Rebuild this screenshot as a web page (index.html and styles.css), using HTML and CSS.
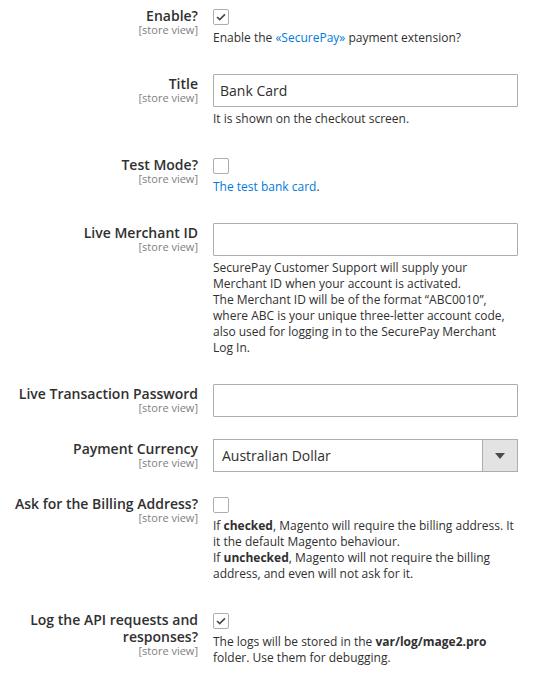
FILE: index.html
```html
<!DOCTYPE html>
<html lang="en">
<head>
<meta charset="utf-8">
<title>SecurePay settings</title>
<link rel="stylesheet" href="styles.css">
</head>
<body>
<div class="form">
  <div class="row">
    <div class="label"><span class="name">Enable?</span><span class="scope">[store view]</span></div>
    <div class="value">
      <span class="checkbox"><svg viewBox="0 0 16 16" width="14" height="14"><polyline points="3.5,8 6.5,11 12.5,5" fill="none" stroke="#514943" stroke-width="2"/></svg></span>
      <p class="note after-check">Enable the <a href="#">«SecurePay»</a> payment extension?</p>
    </div>
  </div>

  <div class="row">
    <div class="label"><span class="name">Title</span><span class="scope">[store view]</span></div>
    <div class="value">
      <input class="text" type="text" value="Bank Card">
      <p class="note after-input">It is shown on the checkout screen.</p>
    </div>
  </div>

  <div class="row">
    <div class="label"><span class="name">Test Mode?</span><span class="scope">[store view]</span></div>
    <div class="value">
      <span class="checkbox"></span>
      <p class="note after-check"><a href="#">The test bank card</a>.</p>
    </div>
  </div>

  <div class="row">
    <div class="label"><span class="name">Live Merchant ID</span><span class="scope">[store view]</span></div>
    <div class="value">
      <input class="text" type="text" value="">
      <p class="note after-input">SecurePay Customer Support will supply your Merchant ID when your account is activated.<br>The Merchant ID will be of the format “ABC0010”, where ABC is your unique three-letter account code, also used for logging in to the SecurePay Merchant Log In.</p>
    </div>
  </div>

  <div class="row">
    <div class="label"><span class="name">Live Transaction Password</span><span class="scope">[store view]</span></div>
    <div class="value">
      <input class="text" type="password" value="">
    </div>
  </div>

  <div class="row">
    <div class="label"><span class="name">Payment Currency</span><span class="scope">[store view]</span></div>
    <div class="value">
      <div class="select"><span class="select-text">Australian Dollar</span><span class="select-arrow"></span></div>
    </div>
  </div>

  <div class="row">
    <div class="label"><span class="name">Ask for the Billing Address?</span><span class="scope">[store view]</span></div>
    <div class="value">
      <span class="checkbox"></span>
      <p class="note after-check">If <b>checked</b>, Magento will require the billing address. It it the default Magento behaviour.<br>If <b>unchecked</b>, Magento will not require the billing address, and even will not ask for it.</p>
    </div>
  </div>

  <div class="row">
    <div class="label"><span class="name">Log the API requests and responses?</span><span class="scope">[store view]</span></div>
    <div class="value">
      <span class="checkbox"><svg viewBox="0 0 16 16" width="14" height="14"><polyline points="3.5,8 6.5,11 12.5,5" fill="none" stroke="#514943" stroke-width="2"/></svg></span>
      <p class="note after-check">The logs will be stored in the <b>var/log/mage2.pro</b> folder. Use them for debugging.</p>
    </div>
  </div>
</div>
</body>
</html>
```

FILE: styles.css
```css
html, body {
  margin: 0;
  padding: 0;
  background: #ffffff;
}

body {
  font-family: "Open Sans", "Noto Sans", sans-serif;
  color: #303030;
}

.form {
  display: flex;
  flex-direction: column;
  gap: 22px;
  padding-top: 6px;
}

.row {
  display: grid;
  grid-template-columns: 198px 305px;
  column-gap: 15px;
  align-items: start;
}

.label {
  display: flex;
  flex-direction: column;
  align-items: flex-end;
  text-align: right;
  padding-top: 1px;
}

.name {
  font-size: 14px;
  font-weight: 600;
  line-height: 17px;
  color: #303030;
}

.scope {
  font-size: 11px;
  line-height: 12px;
  color: #808080;
}

.value {
  display: flex;
  flex-direction: column;
  align-items: stretch;
}

.checkbox {
  box-sizing: border-box;
  width: 16px;
  height: 16px;
  margin-top: 3px;
  border: 1px solid #adadad;
  border-radius: 2px;
  background: #fff;
  display: flex;
  align-items: center;
  justify-content: center;
}

.checkbox svg {
  display: block;
}

.note {
  margin: 0 0 6px 0;
  font-size: 12px;
  line-height: 16px;
  color: #303030;
}

.note.after-check {
  margin-top: 5px;
}

.note.after-input {
  margin-top: 4px;
}

.note a {
  color: #007bdb;
  text-decoration: none;
}

.note b {
  font-weight: 700;
}

.text {
  box-sizing: border-box;
  width: 305px;
  height: 33px;
  margin: 0;
  padding: 0 6px;
  border: 1px solid #adadad;
  border-radius: 1px;
  background: #fff;
  font-family: "Open Sans", "Noto Sans", sans-serif;
  font-size: 14px;
  color: #303030;
  outline: none;
}

.select {
  box-sizing: border-box;
  width: 305px;
  height: 33px;
  border: 1px solid #adadad;
  background: #fff;
  display: flex;
  align-items: stretch;
}

.select-text {
  flex: 1;
  display: flex;
  align-items: center;
  padding-left: 8px;
  font-size: 14px;
  color: #303030;
}

.select-arrow {
  width: 34px;
  border-left: 1px solid #adadad;
  background: #e3e3e3;
  display: flex;
  align-items: center;
  justify-content: center;
}

.select-arrow::after {
  content: "";
  width: 0;
  height: 0;
  border-left: 5px solid transparent;
  border-right: 5px solid transparent;
  border-top: 6px solid #514943;
}
```
